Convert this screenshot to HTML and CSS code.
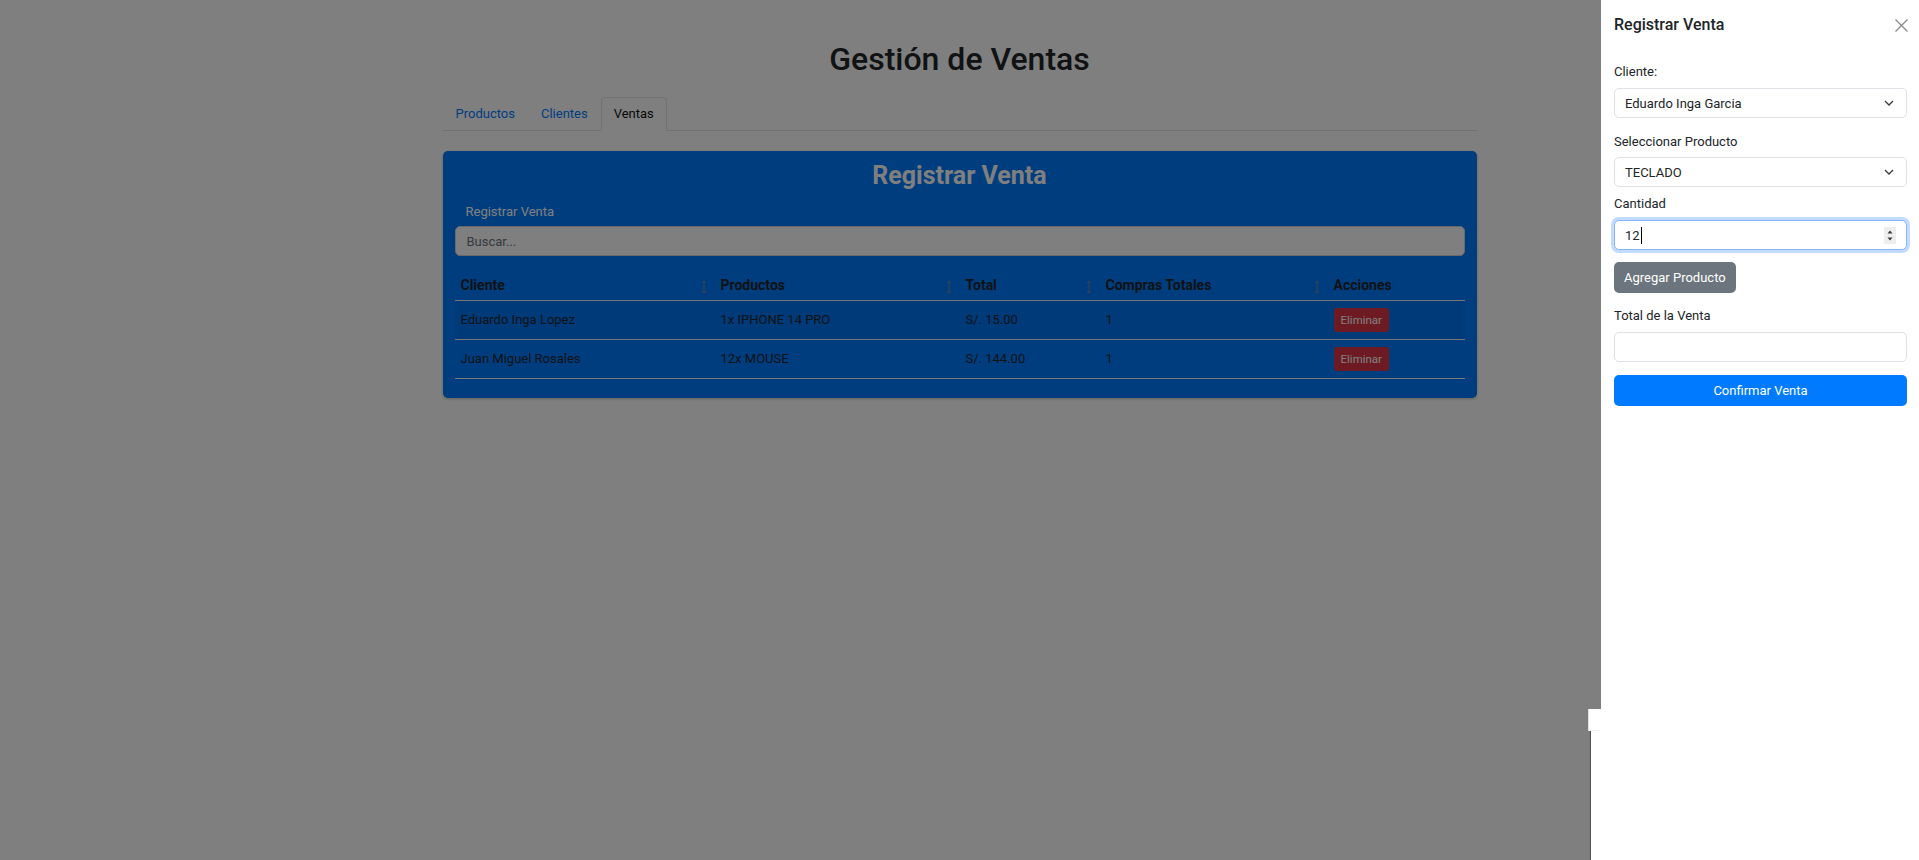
FILE: index.html
```html
<!DOCTYPE html>
<html lang="es">
<head>
<meta charset="utf-8">
<title>Gestión de Ventas</title>
<link rel="stylesheet" href="styles.css">
</head>
<body>
<main class="page">
  <h1 class="page-title">Gestión de Ventas</h1>
  <ul class="tabs">
    <li><a class="tab" href="#">Productos</a></li>
    <li><a class="tab" href="#">Clientes</a></li>
    <li><a class="tab active" href="#">Ventas</a></li>
  </ul>
  <section class="card">
    <h2 class="card-title">Registrar Venta</h2>
    <button class="link-btn" type="button">Registrar Venta</button>
    <input class="search" type="text" placeholder="Buscar...">
    <table class="sales">
      <colgroup>
        <col class="c1"><col class="c2"><col class="c3"><col class="c4"><col class="c5">
      </colgroup>
      <thead>
        <tr>
          <th><div class="th-inner"><span>Cliente</span><svg class="sort" width="6" height="14" viewBox="0 0 6 14"><path d="M3 1V13M1 3L3 1L5 3M1 11L3 13L5 11" fill="none" stroke="#7d8896" stroke-width="1"/></svg></div></th>
          <th><div class="th-inner"><span>Productos</span><svg class="sort" width="6" height="14" viewBox="0 0 6 14"><path d="M3 1V13M1 3L3 1L5 3M1 11L3 13L5 11" fill="none" stroke="#7d8896" stroke-width="1"/></svg></div></th>
          <th><div class="th-inner"><span>Total</span><svg class="sort" width="6" height="14" viewBox="0 0 6 14"><path d="M3 1V13M1 3L3 1L5 3M1 11L3 13L5 11" fill="none" stroke="#7d8896" stroke-width="1"/></svg></div></th>
          <th><div class="th-inner"><span>Compras Totales</span><svg class="sort" width="6" height="14" viewBox="0 0 6 14"><path d="M3 1V13M1 3L3 1L5 3M1 11L3 13L5 11" fill="none" stroke="#7d8896" stroke-width="1"/></svg></div></th>
          <th><div class="th-inner"><span>Acciones</span></div></th>
        </tr>
      </thead>
      <tbody>
        <tr class="odd">
          <td>Eduardo Inga Lopez</td>
          <td>1x IPHONE 14 PRO</td>
          <td>S/. 15.00</td>
          <td>1</td>
          <td><button class="btn-del" type="button">Eliminar</button></td>
        </tr>
        <tr>
          <td>Juan Miguel Rosales</td>
          <td>12x MOUSE</td>
          <td>S/. 144.00</td>
          <td>1</td>
          <td><button class="btn-del" type="button">Eliminar</button></td>
        </tr>
      </tbody>
    </table>
  </section>
</main>

<div class="backdrop"></div>

<aside class="offcanvas">
  <div class="glitch-a"></div>
  <div class="glitch-b"></div>
  <header class="oc-header">
    <h5 class="oc-title">Registrar Venta</h5>
    <button class="oc-close" type="button" aria-label="Cerrar">
      <svg width="13" height="13" viewBox="0 0 13 13"><path d="M0.5 0.5L12.5 12.5M12.5 0.5L0.5 12.5" stroke="#8a8a8a" stroke-width="1.3" fill="none"/></svg>
    </button>
  </header>
  <div class="oc-body">
    <label class="lbl lbl-1">Cliente:</label>
    <div class="select sel-1" role="combobox">
      <span>Eduardo Inga Garcia</span>
      <svg width="10" height="6" viewBox="0 0 10 6"><path d="M1 1L5 5L9 1" fill="none" stroke="#343a40" stroke-width="1.3"/></svg>
    </div>
    <label class="lbl lbl-2">Seleccionar Producto</label>
    <div class="select sel-2" role="combobox">
      <span>TECLADO</span>
      <svg width="10" height="6" viewBox="0 0 10 6"><path d="M1 1L5 5L9 1" fill="none" stroke="#343a40" stroke-width="1.3"/></svg>
    </div>
    <label class="lbl lbl-3">Cantidad</label>
    <div class="field focused">
      <span class="val">12</span><span class="caret"></span>
      <span class="grow"></span>
      <span class="spin">
        <svg width="12" height="17" viewBox="0 0 12 17"><path d="M3.5 6.5L6 3.5L8.5 6.5Z M3.5 10.5L6 13.5L8.5 10.5Z" fill="#3a3a3a"/></svg>
      </span>
    </div>
    <button class="btn-secondary" type="button">Agregar Producto</button>
    <label class="lbl lbl-4">Total de la Venta</label>
    <div class="field total"></div>
    <button class="btn-primary" type="button">Confirmar Venta</button>
  </div>
</aside>
</body>
</html>
```

FILE: styles.css
```css
* { box-sizing: border-box; }

html, body {
  margin: 0;
  padding: 0;
  background: #fff;
  font-family: Roboto, "Noto Sans", "Liberation Sans", sans-serif;
  color: #212529;
  overflow: hidden;
}

body { width: 1919px; height: 860px; }

.page {
  width: 1034px;
  margin: 0 auto;
  padding-top: 40px;
}

.page-title {
  margin: 0;
  text-align: center;
  font-size: 32px;
  line-height: 38px;
  font-weight: 500;
  color: #212529;
}

.tabs {
  list-style: none;
  margin: 19px 0 0;
  padding: 0;
  display: flex;
  border-bottom: 1px solid #dee2e6;
}

.tab {
  display: block;
  padding: 6px 12px;
  font-size: 13px;
  line-height: 20px;
  color: #007bff;
  text-decoration: none;
  border: 1px solid transparent;
  border-radius: 4px 4px 0 0;
  margin-bottom: -1px;
}

.tab.active {
  color: #111;
  background: #fff;
  border-color: #dee2e6 #dee2e6 #fff;
}

.card {
  margin-top: 20px;
  background: #007bff;
  border-radius: 5px;
  padding: 10px 12px 19px;
  box-shadow: 0 1px 3px rgba(0,0,0,.25);
}

.card-title {
  margin: 0;
  text-align: center;
  color: #fff;
  font-size: 25px;
  line-height: 29px;
  font-weight: 700;
}

.link-btn {
  display: block;
  margin: 11px 0 4px;
  padding: 0 0 0 11px;
  border: none;
  background: transparent;
  color: #fff;
  font-family: inherit;
  font-size: 13px;
  line-height: 21px;
}

.search {
  display: block;
  width: 100%;
  height: 30px;
  padding: 0 11px;
  border: 1px solid #ced4da;
  border-radius: 5px;
  background: #fff;
  font-family: inherit;
  font-size: 13px;
  color: #212529;
}
.search::placeholder { color: #6c757d; }

.sales {
  width: 100%;
  margin-top: 7px;
  border-collapse: collapse;
  table-layout: fixed;
  font-size: 13px;
  color: #212529;
}

.c1 { width: 260px; }
.c2 { width: 245px; }
.c3 { width: 140px; }
.c4 { width: 228px; }
.c5 { width: 137px; }

.sales th {
  text-align: left;
  font-size: 14px;
  font-weight: 700;
  padding: 12px 6px 4px;
  line-height: 21px;
  border-bottom: 1px solid #eceff2;
}

.th-inner {
  display: flex;
  justify-content: space-between;
  align-items: center;
}

.sort { margin-right: 2px; margin-top: 2px; flex: none; }

.sales td {
  padding: 7px 6px;
  height: 39px;
  line-height: 24px;
  vertical-align: middle;
  border-top: 1px solid #eceff2;
}

.sales tbody tr:last-child td { border-bottom: 1px solid #eceff2; }

.sales tr.odd td { background: rgba(0,0,0,.05); }

.btn-del {
  display: block;
  height: 24px;
  border: none;
  border-radius: 3px;
  background: #dc3545;
  color: #fff;
  font-family: inherit;
  font-size: 11.5px;
  line-height: 18px;
  padding: 3px 7px;
}

.backdrop {
  position: fixed;
  inset: 0;
  background: rgba(0,0,0,.5);
  z-index: 10;
}

.offcanvas {
  position: fixed;
  top: 0;
  right: 0;
  bottom: 0;
  width: 318px;
  background: #fff;
  z-index: 20;
}

.glitch-a {
  position: absolute;
  left: -13px;
  top: 709px;
  width: 13px;
  height: 22px;
  background: #fff;
  border-left: 1px solid #e2e2e2;
}

.glitch-b {
  position: absolute;
  left: -10px;
  top: 731px;
  bottom: 0;
  width: 10px;
  background: #fff;
  box-shadow: -1px 0 1px rgba(0,0,0,.35);
}

.oc-header {
  display: flex;
  justify-content: space-between;
  align-items: center;
  padding: 13px 11px 13px 13px;
}

.oc-title {
  margin: 0;
  font-size: 16px;
  line-height: 24px;
  font-weight: 500;
  color: #212529;
}

.oc-close {
  border: none;
  background: transparent;
  padding: 0;
  width: 13px;
  height: 13px;
  display: flex;
}

.oc-body {
  padding: 12px 12px 0 13px;
}

.lbl {
  display: block;
  font-size: 13px;
  line-height: 20px;
  margin-bottom: 6px;
  color: #212529;
}
.lbl-2 { margin-top: 14px; margin-bottom: 5px; }
.lbl-3 { margin-top: 7px; }
.lbl-4 { margin-top: 13px; }

.select {
  display: flex;
  justify-content: space-between;
  align-items: center;
  height: 30px;
  padding: 0 12px 0 10px;
  border: 1px solid #dee2e6;
  border-radius: 5px;
  font-size: 13px;
  color: #212529;
  background: #fff;
}

.field {
  display: flex;
  align-items: center;
  height: 30px;
  padding: 0 10px;
  border: 1px solid #dee2e6;
  border-radius: 5px;
  font-size: 13px;
  background: #fff;
}

.field.focused {
  border-color: #86b7fe;
  box-shadow: 0 0 0 3px rgba(13,110,253,.25);
}

.val { line-height: 21px; }
.caret { width: 1px; height: 17px; background: #000; margin-left: 1px; }
.grow { flex: 1; }
.spin { display: flex; background: #eee; }

.btn-secondary {
  display: block;
  margin-top: 12px;
  height: 31px;
  padding: 0 10px;
  border: none;
  border-radius: 5px;
  background: #6c757d;
  color: #fff;
  font-family: inherit;
  font-size: 13px;
}

.field.total { height: 30px; }

.btn-primary {
  display: block;
  width: 100%;
  margin-top: 13px;
  height: 31px;
  border: none;
  border-radius: 5px;
  background: #007bff;
  color: #fff;
  font-family: inherit;
  font-size: 13px;
}
```
